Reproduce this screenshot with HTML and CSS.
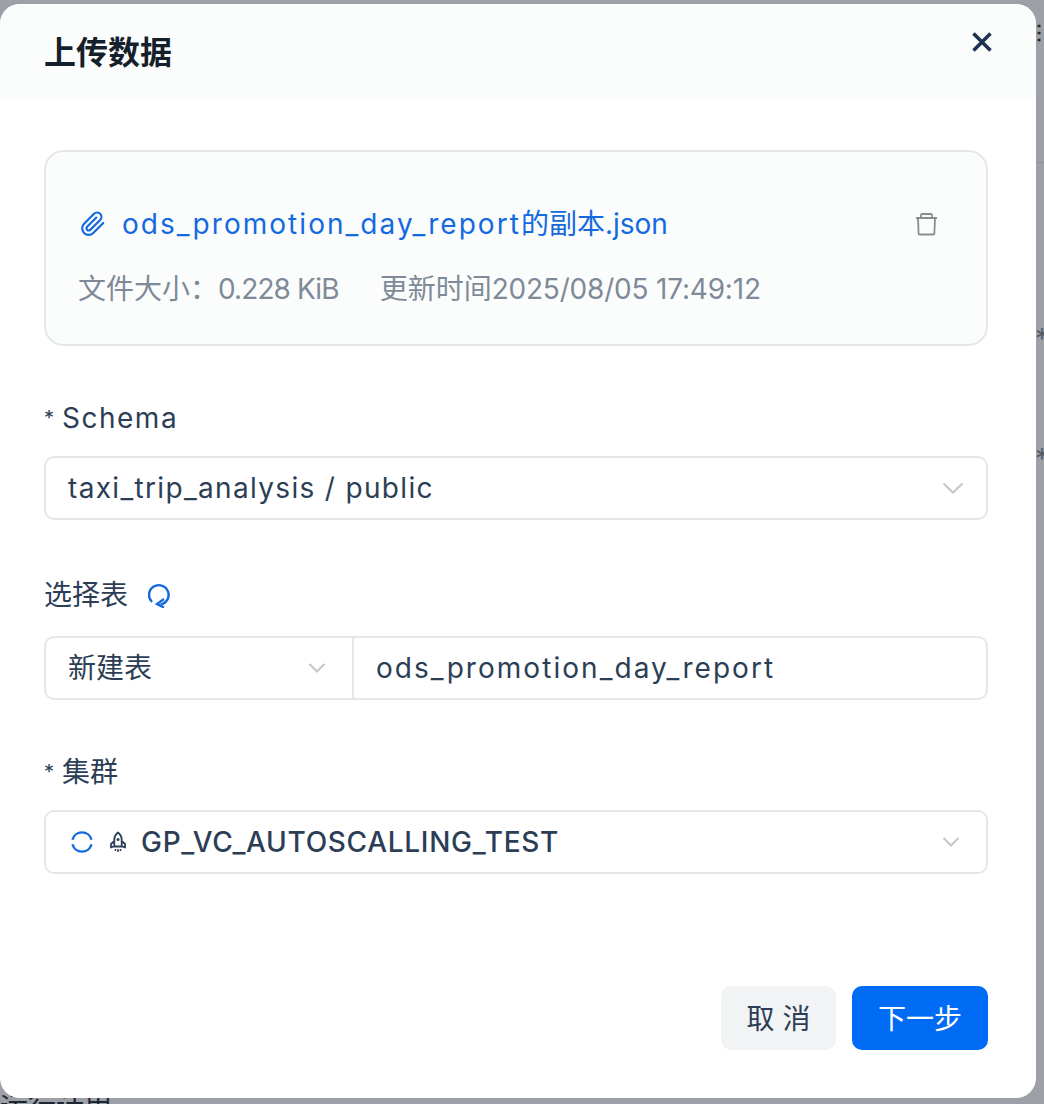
FILE: index.html
```html
<!DOCTYPE html>
<html lang="zh">
<head>
<meta charset="utf-8">
<title>上传数据</title>
<link rel="stylesheet" href="styles.css">
</head>
<body>
<div class="page-behind">
  <span class="behind-bottom">运行计用</span>
  <span class="behind-menu">⋮</span>
  <span class="behind-star star-a">*</span>
  <span class="behind-star star-b">*</span>
  <span class="behind-line"></span>
</div>
<section class="modal">
  <header class="modal-head">
    <h1 class="modal-title">上传数据</h1>
    <button class="close" aria-label="关闭">
      <svg width="22" height="22" viewBox="0 0 22 22"><path d="M2.500 2.500 19.500 19.500M19.500 2.500 2.500 19.500" fill="none" stroke="#1e3350" stroke-width="3.600"/></svg>
    </button>
  </header>
  <div class="modal-body">
    <div class="file-card">
      <div class="file-row">
        <svg class="clip" width="26" height="26" viewBox="0 0 24 24"><path d="M21.440 11.050l-9.190 9.190a6 6 0 0 1-8.490-8.490l9.190-9.190a4 4 0 0 1 5.660 5.660l-9.200 9.190a2 2 0 0 1-2.830-2.830l8.490-8.480" fill="none" stroke="#1569e0" stroke-width="2" stroke-linecap="round" stroke-linejoin="round"/></svg>
        <span class="file-name"><span class="wide">ods_promotion_day_report</span>的副本.json</span>
        <svg class="trash" width="24" height="24" viewBox="0 0 24 24"><path d="M2 6h21M7 6V3q0-1 1-1h9q1 0 1 1v3M4 6l.6 15.500q0 1 1 1h13.800q1 0 1-1L21 6" fill="none" stroke="#8b8d92" stroke-width="1.800"/></svg>
      </div>
      <div class="file-meta">
        <span>文件大小：<span class="tight-size">0.228 KiB</span></span>
        <span>更新时间<span class="tight-date">2025/08/05 17:49:12</span></span>
      </div>
    </div>

    <div class="field field-schema">
      <label class="label"><i class="req">*</i><span class="label-latin">Schema</span></label>
      <div class="control">
        <span class="value value-schema">taxi_trip_analysis / public</span>
        <svg class="chev chev-lg" width="22" height="12" viewBox="0 0 22 12"><path d="M1.500 1.500 11 10.500 20.500 1.500" fill="none" stroke="#c4c6cb" stroke-width="2"/></svg>
      </div>
    </div>

    <div class="field field-table">
      <label class="label">选择表
        <svg class="refresh" width="24" height="26" viewBox="0 0 24 26"><path d="M4 20A9.800 9.800 0 1 1 12.500 22.600" fill="none" stroke="#1569e0" stroke-width="2.400"/><path d="M16 17 9 22l7 3.500" fill="none" stroke="#1569e0" stroke-width="2.400"/></svg>
      </label>
      <div class="control-group">
        <div class="group-select">
          <span class="value">新建表</span>
          <svg class="chev" width="18" height="10" viewBox="0 0 18 10"><path d="M1.500 1 9 8.500 16.500 1" fill="none" stroke="#c4c6cb" stroke-width="2"/></svg>
        </div>
        <div class="group-input"><span class="value value-table">ods_promotion_day_report</span></div>
      </div>
    </div>

    <div class="field field-cluster">
      <label class="label"><i class="req">*</i>集群</label>
      <div class="control control-cluster">
        <svg class="spin" width="24" height="24" viewBox="0 0 24 24"><path d="M2.500 9.800A9.800 9.800 0 0 1 21.500 9.800M21.500 14.200A9.800 9.800 0 0 1 2.500 14.200" fill="none" stroke="#1569e0" stroke-width="2.400"/></svg>
        <svg class="rocket" width="20" height="22" viewBox="0 0 20 22"><path d="M10 1.500c2.600 2 3.700 4.600 3.700 7.500v6.500H6.300V9c0-2.900 1.100-5.500 3.700-7.500ZM6.300 10 3 13v3.500l3.300-1.300M13.700 10l3.300 3v3.500l-3.300-1.300" fill="none" stroke="#2c3e55" stroke-width="1.800" stroke-linejoin="round"/><circle cx="10" cy="8.500" r="1.500" fill="#2c3e55"/><path d="M7.500 18v2M10 18v3M12.500 18v2" stroke="#2c3e55" stroke-width="1.500"/></svg>
        <span class="value value-strong">GP_VC_AUTOSCALLING_TEST</span>
        <svg class="chev" width="18" height="10" viewBox="0 0 18 10"><path d="M1.500 1 9 8.500 16.500 1" fill="none" stroke="#c4c6cb" stroke-width="2"/></svg>
      </div>
    </div>

    <footer class="actions">
      <button class="btn btn-cancel">取 消</button>
      <button class="btn btn-primary">下一步</button>
    </footer>
  </div>
</section>
</body>
</html>
```
FILE: styles.css
```css
* { box-sizing: border-box; }
html, body { margin: 0; height: 100%; }
body {
  background: #9ea0a8;
  font-family: Inter, "Noto Sans CJK SC", sans-serif;
  color: #2c3e55;
  overflow: hidden;
  position: relative;
  width: 1044px;
  height: 1104px;
}
.page-behind { position: absolute; inset: 0; color: #1c2735; }
.behind-bottom { position: absolute; left: 0; top: 1090px; font-size: 28px; line-height: 34px; }
.behind-menu { position: absolute; left: 1029px; top: 19px; font-size: 20px; line-height: 26px; font-weight: 700; }
.behind-star { position: absolute; left: 1035px; font-size: 28px; line-height: 28px; color: #555e6b; }
.star-a { top: 325px; }
.star-b { top: 445px; }
.behind-line { position: absolute; left: 1036px; top: 162px; width: 8px; height: 1px; background: #8f9199; }

.modal {
  position: absolute;
  left: 0;
  top: 4px;
  width: 1036px;
  height: 1094px;
  background: #fff;
  border-radius: 20px;
  overflow: hidden;
  display: flex;
  flex-direction: column;
}
.modal-head {
  height: 96px;
  flex: none;
  background: #fbfdfc;
  padding: 0 44px;
  display: flex;
  align-items: center;
  justify-content: space-between;
}
.modal-title { margin: 0; font-size: 32px; line-height: 40px; font-weight: 700; color: #161f2c; transform: translateY(1px); }
.close {
  border: 0; padding: 0; background: none; display: block;
  margin: -20px -1px 0 0;
  width: 22px; height: 22px;
}
.close svg { display: block; }

.modal-body { flex: 1; padding: 50px 48px 48px 44px; display: flex; flex-direction: column; }

.file-card {
  height: 196px;
  background: #fbfdfc;
  border: 2px solid #e5e7eb;
  border-radius: 20px;
  padding: 0 34px;
  display: flex;
  flex-direction: column;
}
.file-row { display: flex; align-items: center; margin-top: 54px; height: 36px; }
.clip { flex: none; margin-right: 16px; }
.file-name { flex: 1; font-size: 28px; line-height: 36px; color: #1569e0; white-space: nowrap; }
.wide { letter-spacing: 2.040px; }
.trash { flex: none; margin-right: 14px; }
.file-meta { display: flex; gap: 41px; margin: 29px 0 0 -2px; font-size: 28px; line-height: 36px; color: #7f8a98; white-space: nowrap; }
.tight-size { letter-spacing: -0.900px; }
.tight-date { letter-spacing: -0.200px; }

.field { display: flex; flex-direction: column; }
.field-schema { margin-top: 54px; }
.field-table { margin-top: 57px; }
.field-table .control-group { margin-top: 23px; }
.field-cluster { margin-top: 54px; }
.label { display: flex; align-items: center; font-size: 28px; line-height: 36px; color: #2c3e55; }
.label-latin { letter-spacing: 1.500px; }
.req { font-style: normal; font-size: 20px; margin-right: 8px; }
.refresh { margin-left: 20px; }

.control, .control-group {
  height: 64px;
  margin-top: 20px;
  border: 2px solid #e5e7eb;
  border-radius: 10px;
  background: #fff;
  display: flex;
  align-items: center;
}
.control { padding: 0 22px; }
.value { font-size: 28px; line-height: 36px; color: #2c3e55; white-space: nowrap; }
.control .value { flex: 1; }
.value-schema { letter-spacing: 1.330px; }
.value-table { letter-spacing: 2.050px; }
.value-strong { font-weight: 500; letter-spacing: 0.700px; }
.chev { flex: none; }
.group-select { width: 308px; height: 100%; padding: 0 26px 0 22px; display: flex; align-items: center; justify-content: space-between; border-right: 2px solid #e5e7eb; }
.group-input { flex: 1; height: 100%; padding: 0 22px; display: flex; align-items: center; }
.control-cluster { padding-left: 24px; padding-right: 26px; }
.spin { margin-right: 14px; flex: none; }
.rocket { margin-right: 13px; flex: none; }

.actions { margin-top: auto; display: flex; justify-content: flex-end; gap: 16px; }
.btn { height: 64px; border: 0; border-radius: 10px; font: inherit; font-size: 28px; padding: 0 0 2px; }
.btn-cancel { width: 115px; background: #f1f3f5; color: #2c3e55; }
.btn-primary { width: 136px; background: #006cf5; color: #fff; }
```
